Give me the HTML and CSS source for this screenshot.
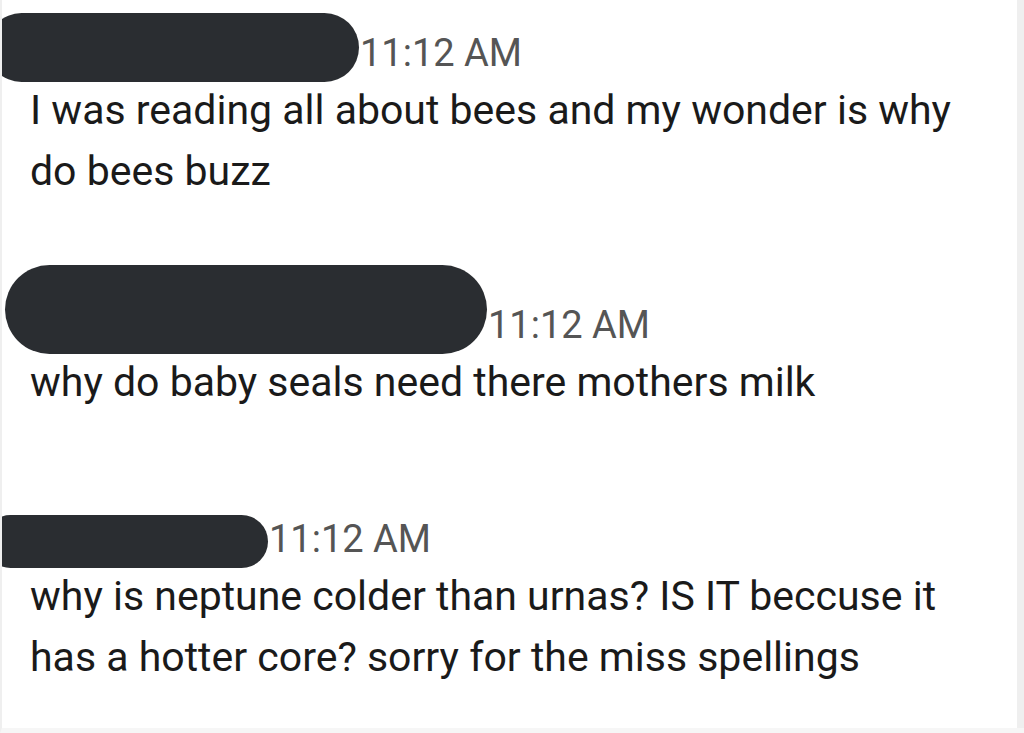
FILE: index.html
```html
<!DOCTYPE html>
<html>
<head>
<meta charset="utf-8">
<link rel="stylesheet" href="styles.css">
</head>
<body>
<div class="screen">
  <div class="feed">
    <div class="msg msg-1">
      <div class="head">
        <div class="pill pill-1"></div>
        <span class="time">11:12 AM</span>
      </div>
      <p class="text">I was reading all about bees and my wonder is why do bees buzz</p>
    </div>
    <div class="msg msg-2">
      <div class="head">
        <div class="pill pill-2"></div>
        <span class="time">11:12 AM</span>
      </div>
      <p class="text">why do baby seals need there mothers milk</p>
    </div>
    <div class="msg msg-3">
      <div class="head">
        <div class="pill pill-3"></div>
        <span class="time">11:12 AM</span>
      </div>
      <p class="text">why is neptune colder than urnas? IS IT beccuse it has a hotter core? sorry for the miss spellings</p>
    </div>
  </div>
  <div class="scrollbar"></div>
</div>
</body>
</html>
```

FILE: styles.css
```css
html, body {
  margin: 0;
  padding: 0;
  background: #ffffff;
}
body {
  width: 1024px;
  height: 733px;
  overflow: hidden;
  font-family: Roboto, "Noto Sans", sans-serif;
}
.screen {
  display: flex;
  height: 733px;
  border-left: 2px solid #efefef;
  box-sizing: border-box;
  border-bottom: 5px solid #f6f6f6;
}
.feed {
  flex: 1;
  padding-left: 28px;
  overflow: hidden;
}
.scrollbar {
  width: 7px;
  background: #efefef;
}
.msg-1 { margin-top: 13px; }
.msg-2 { margin-top: 63px; }
.msg-3 { margin-top: 102px; }
.head {
  display: flex;
  align-items: flex-end;
}
.pill {
  background: #2a2d31;
  border-radius: 48px;
  flex: none;
}
.pill-1 { width: 372px; height: 69px; margin-left: -43px; }
.pill-2 { width: 482px; height: 89px; margin-left: -25px; }
.pill-3 { width: 284px; height: 53px; margin-left: -46px; }
.time {
  font-size: 38px;
  line-height: 44px;
  color: #555555;
  margin-bottom: 7px;
  margin-left: 1px;
}
.text {
  margin: -2px 0 0 0;
  font-size: 41px;
  line-height: 61px;
  color: #1a1a1a;
  width: 960px;
}
```
